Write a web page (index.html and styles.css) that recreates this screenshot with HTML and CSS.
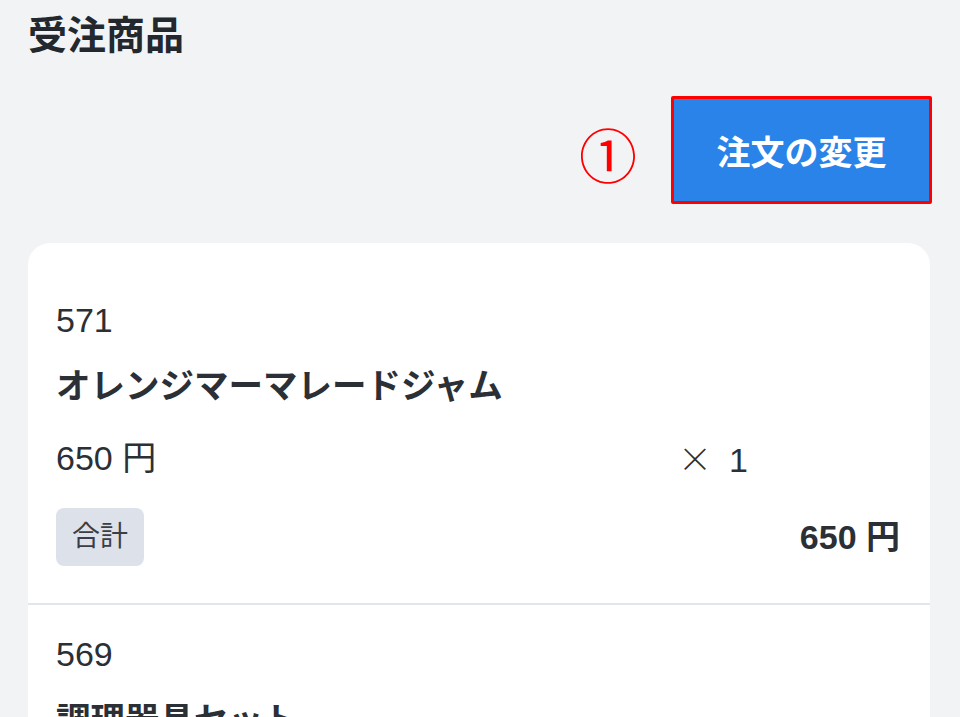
FILE: index.html
```html
<!DOCTYPE html>
<html lang="ja">
<head>
<meta charset="utf-8">
<link rel="stylesheet" href="styles.css">
</head>
<body>
<div class="page">
  <h1 class="title">受注商品</h1>
  <div class="actions">
    <span class="marker">①</span>
    <button class="change-btn">注文の変更</button>
  </div>
  <div class="card">
    <div class="item">
      <div class="code">571</div>
      <div class="name">オレンジマーマレードジャム</div>
      <div class="price-row">
        <span class="price">650 円</span>
        <span class="qty"><span class="times">×</span><span>1</span></span>
      </div>
      <div class="total-row">
        <span class="badge">合計</span>
        <span class="total">650 円</span>
      </div>
    </div>
    <div class="item">
      <div class="code">569</div>
      <div class="name">調理器具セット</div>
    </div>
  </div>
</div>
</body>
</html>
```
FILE: styles.css
```css
* { box-sizing: border-box; }
html, body {
  margin: 0;
  padding: 0;
  background: #f2f3f5;
  overflow: hidden;
}
body {
  font-family: "Liberation Sans", "Noto Sans CJK JP", sans-serif;
  color: #2b2f36;
}
.page {
  padding: 11px 28px 0 28px;
  display: flex;
  flex-direction: column;
}
.title {
  margin: 0;
  font-size: 39px;
  line-height: 50px;
  font-weight: 700;
  color: #23272e;
}
.actions {
  display: flex;
  justify-content: flex-end;
  align-items: center;
  gap: 34px;
  margin-top: 35px;
  margin-right: 0;
}
.marker {
  color: #f00;
  font-size: 58px;
  line-height: 60px;
  font-family: "Noto Sans CJK JP", sans-serif;
  font-weight: 400;
  margin-top: 6px;
}
.change-btn {
  width: 261px;
  height: 108px;
  background: #2a83e8;
  border: 3px solid #f00;
  border-radius: 2px;
  color: #fff;
  font-family: "Liberation Sans", "Noto Sans CJK JP", sans-serif;
  font-size: 34px;
  font-weight: 700;
  padding: 0;
}
.card {
  margin-top: 39px;
  background: #fff;
  border-radius: 22px 22px 0 0;
  padding-top: 28px;
  width: 902px;
  height: 600px;
}
.item {
  padding: 25px 30px 37px 28px;
  display: flex;
  flex-direction: column;
}
.item + .item {
  border-top: 2px solid #e3e6ee;
}
.code {
  font-size: 34px;
  line-height: 48px;
}
.name {
  margin-top: 18px;
  font-size: 34.5px;
  line-height: 48px;
  font-weight: 700;
}
.price-row {
  margin-top: 24px;
  display: grid;
  grid-template-columns: 1fr 222px;
  font-size: 34px;
  line-height: 48px;
  height: 48px;
}
.qty {
  display: flex;
  align-items: baseline;
  gap: 17px;
}
.times {
  font-family: "Noto Sans CJK JP", sans-serif;
  font-weight: 300;
  line-height: 48px;
}
.total-row {
  margin-top: 26px;
  display: flex;
  justify-content: space-between;
  align-items: center;
}
.badge {
  background: #dde1ea;
  border-radius: 8px;
  padding: 12px 16px;
  font-size: 28px;
  line-height: 34px;
  color: #3a3f47;
}
.total {
  font-size: 34px;
  font-weight: 700;
  line-height: 48px;
}
```
